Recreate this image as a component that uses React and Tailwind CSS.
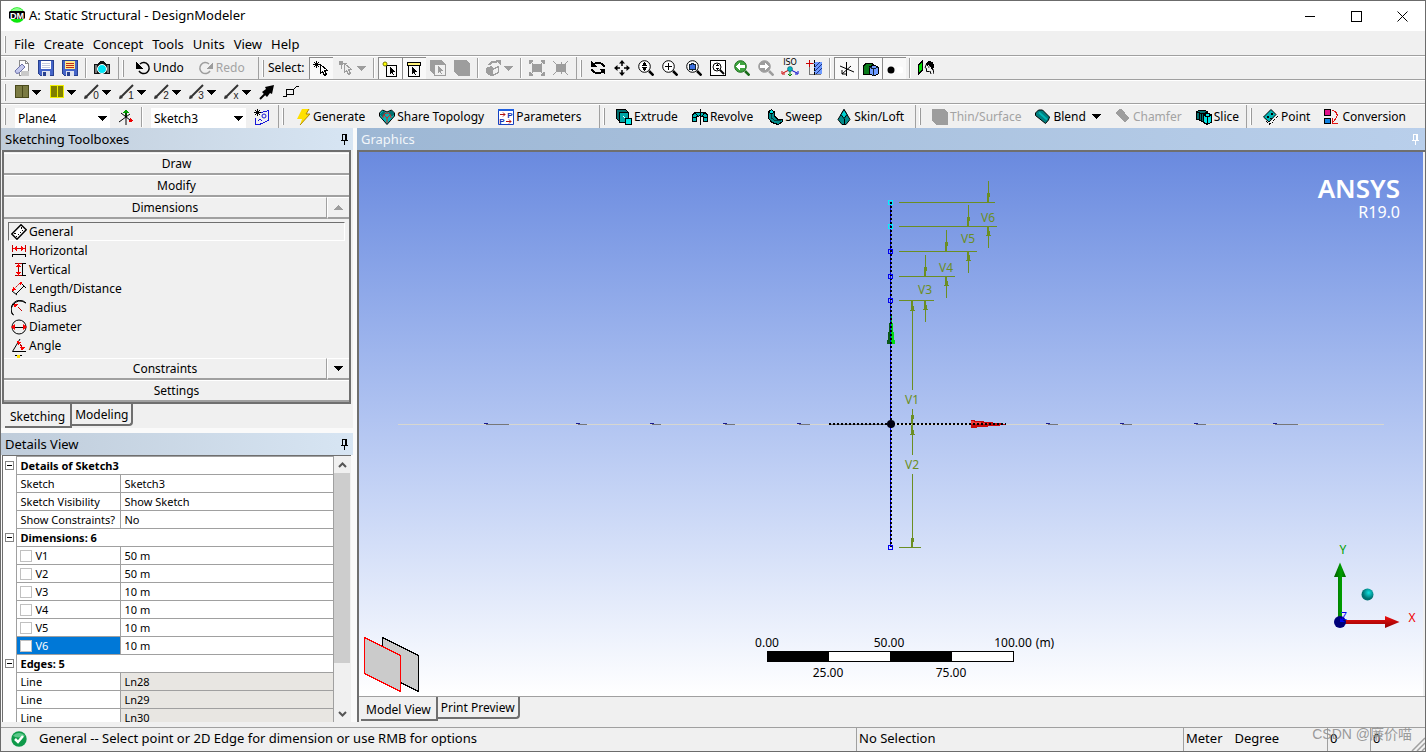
import { useState } from "react";

// --- Icons ---
const Icon = ({ children, className = "h-4 w-4" }) => (
  <svg
    className={`${className} shrink-0`}
    viewBox="0 0 16 16"
    fill="none"
    stroke="#000"
    shapeRendering="crispEdges"
    aria-hidden="true"
  >
    {children}
  </svg>
);

const Caret = ({ color = "#000", up = false }) => (
  <svg className="h-[5px] w-[9px] shrink-0" viewBox="0 0 9 5" shapeRendering="crispEdges" aria-hidden="true">
    <path d={up ? "M0 5h9L4.5 0z" : "M0 0h9L4.5 5z"} fill={color} />
  </svg>
);

const AppIcon = () => (
  <svg className="h-4 w-4 shrink-0" viewBox="0 0 16 16" aria-hidden="true">
    <circle cx="8" cy="8" r="7.8" fill="#0be80b" />
    <path d="M2 4a7 6 0 0 1 12 0z" fill="#8dff8d" />
    <path d="M1 4h14l1 1v6l-1 1H1l-1-1V5z" fill="#000" />
    <text x="8" y="11.5" textAnchor="middle" fontSize="9" fontWeight="700" fill="#fff" fontFamily="Liberation Sans, sans-serif">
      DM
    </text>
  </svg>
);

const NewIcon = () => (
  <Icon>
    <path d="M5.500 .5h6l3 3v12h-9z" fill="#fdfdfd" stroke="#8a8a8a" />
    <path d="M7 11h8v5H7z" fill="#c9c9c9" stroke="none" />
    <path d="M11.500 .5v3h3" stroke="#8a8a8a" />
    <path d="M1 11l7-7 3 3-6 6q-3 2-4-2z" fill="#c5c9ee" stroke="#6d72a8" shapeRendering="auto" />
  </Icon>
);

const SaveIcon = ({ lines = "#c4cbe0", paper = "#fff" }) => (
  <Icon>
    <path d="M.5 .5h15v15h-13l-2-2z" fill="#4464c8" stroke="#27408f" />
    <path d="M3 1h10v8H3z" fill={paper} stroke="none" />
    <path d="M4 3.500h8M4 5.500h8M4 7.500h8" stroke={lines} />
    <path d="M4 11h8v5H4z" fill="#dfe3ee" stroke="none" />
    <path d="M5 12h3v4H5z" fill="#27408f" stroke="none" />
  </Icon>
);

const CameraIcon = () => (
  <Icon>
    <path d="M0 4h4l2-3h4l2 3h4v10H0z" fill="#111" stroke="none" />
    <path d="M1 5h2v8H1zM13 5h2v8h-2z" fill="#777" stroke="none" />
    <circle cx="8" cy="9" r="4.500" fill="#00e5f5" stroke="#fff" shapeRendering="auto" />
  </Icon>
);

const UndoIcon = () => (
  <Icon>
    <path d="M4 4a5.500 5.500 0 1 1-1 7" strokeWidth="1.500" shapeRendering="auto" transform="translate(1 0)" />
    <path d="M1 2v7h7z" fill="#000" stroke="none" />
  </Icon>
);

const RedoIcon = () => (
  <Icon>
    <path d="M11 4a5.500 5.500 0 1 0 1 7" strokeWidth="1.500" stroke="#9d9d9d" shapeRendering="auto" />
    <path d="M15 2v7H8z" fill="#9d9d9d" stroke="none" />
  </Icon>
);

const CursorShape = ({ x = 0, y = 0, fill = "#fff", stroke = "#000" }) => (
  <path
    transform={`translate(${x} ${y})`}
    d="M.5 .5v9l2-2 2 4 2-1-2-4h3z"
    fill={fill}
    stroke={stroke}
  />
);

const NewSelectIcon = () => (
  <Icon>
    <path d="M3.500 0v7M0 3.500h7M1 1l5 5M6 1l-5 5" />
    <CursorShape x={7} y={3} />
  </Icon>
);

const SelectModeIcon = () => (
  <Icon>
    <path d="M0 1h4v4H0z" fill="#9d9d9d" stroke="none" />
    <path d="M4 3h4M2 5v4" stroke="#9d9d9d" />
    <CursorShape x={5} y={3} fill="#eee" stroke="#9d9d9d" />
  </Icon>
);

const PointFilterIcon = () => (
  <Icon>
    <path d="M4.500 4.500h10v11h-10z" />
    <circle cx="3" cy="3" r="2" fill="#ff0" stroke="#7a7a00" shapeRendering="auto" />
    <path d="M8 6v7l2-2 1 3h1l-1-3h2z" fill="#000" stroke="none" />
  </Icon>
);

const EdgeFilterIcon = () => (
  <Icon>
    <path d="M2.500 4.500h11v11h-11z" />
    <path d="M1.500 1.500h13v3h-13z" fill="#fff27a" />
    <path d="M6 6v7l2-2 1 3h1l-1-3h2z" fill="#000" stroke="none" />
  </Icon>
);

const FaceFilterIcon = () => (
  <Icon>
    <path d="M0 0h11l4 4H4v11l-4-4z" fill="#9d9d9d" stroke="none" />
    <path d="M4.500 4.500h11v11h-11z" fill="#f0f0f0" stroke="#9d9d9d" />
    <path d="M8 6v7l2-2 1 3h1l-1-3h2z" fill="#9d9d9d" stroke="none" />
  </Icon>
);

const BodyIcon = () => (
  <Icon>
    <path d="M0 0h12l4 4v12H4l-4-4z" fill="#9d9d9d" stroke="none" />
  </Icon>
);

const ExtendIcon = () => (
  <Icon>
    <path d="M0 8l5-2 2 2v7l-2 1-5-3z" fill="#9d9d9d" stroke="none" />
    <path d="M6.500 9.500l6-3v6l-6 3z" fill="#f0f0f0" stroke="#9d9d9d" />
    <path d="M3 5q2-4 8-3" stroke="#9d9d9d" strokeWidth="2" />
    <path d="M9 0h6v6z" fill="#9d9d9d" stroke="none" />
  </Icon>
);

const BoxZoomIcon = () => (
  <Icon>
    <path d="M3 4h10v8H3z" fill="#9d9d9d" stroke="none" />
    <path d="M0 0h4v2H2v2H0zM12 0h4v4h-2V2h-2zM0 12h2v2h2v2H0zM14 12h2v4h-4v-2h2z" fill="#9d9d9d" stroke="none" />
    <path d="M1 1l3 3M15 1l-3 3M1 15l3-3M15 15l-3-3" stroke="#9d9d9d" />
  </Icon>
);

const ShrinkIcon = () => (
  <Icon>
    <path d="M3 4h10v8H3z" fill="#9d9d9d" stroke="none" />
    <path d="M0 1l4 4M15 1l-4 4M0 15l4-4M15 15l-4-4M8 2v2M8 12v2" stroke="#9d9d9d" />
  </Icon>
);

const RotateIcon = () => (
  <Icon>
    <path d="M3 5q4-4 9-1q2 1 2 3" strokeWidth="2" />
    <path d="M1 1v6h6z" fill="#000" stroke="none" />
    <path d="M13 11q-4 4-9 1q-2-1-2-3" strokeWidth="2" />
    <path d="M15 15V9H9z" fill="#000" stroke="none" />
  </Icon>
);

const PanIcon = () => (
  <Icon>
    <path d="M8 3v3M8 10v3M3 8h3M10 8h3" strokeWidth="1.500" shapeRendering="auto" />
    <path d="M8 0l3 3.500H5zM8 16l3-3.500H5zM0 8l3.500-3v6zM16 8l-3.500-3v6z" fill="#000" stroke="none" shapeRendering="auto" />
  </Icon>
);

const Lens = ({ children, color = "#000", fill = "#fff" }) => (
  <Icon>
    <circle cx="6.500" cy="6.500" r="5.800" fill={fill} stroke={color} shapeRendering="auto" />
    <path d="M11 11l4.500 4.500" stroke={color} strokeWidth="2.500" shapeRendering="auto" />
    {children}
  </Icon>
);

const ZoomFitIcon = () => (
  <Icon>
    <path d="M.5 .5h15v15H.5z" fill="#fff" />
    <circle cx="7" cy="7" r="4" shapeRendering="auto" />
    <path d="M10 10l4 4" strokeWidth="2" shapeRendering="auto" />
    <path d="M7 4l2 2H5zM7 10l2-2H5z" fill="#000" stroke="none" />
  </Icon>
);

const IsoIcon = () => (
  <svg className="h-4 w-4 shrink-0 overflow-visible" viewBox="0 0 16 16" aria-hidden="true">
    <text x="8" y="5" textAnchor="middle" fontSize="8" fontFamily="DejaVu Sans, sans-serif" fill="#000">
      ISO
    </text>
    <path d="M7 10L1 13M0 11v3h3" stroke="#c00" fill="none" />
    <path d="M9 10l6 3M16 11v3h-3" stroke="#00c" fill="none" />
    <path d="M8 11v5M6 14l2 2 2-2" stroke="#008000" fill="none" />
    <circle cx="8" cy="9" r="2.500" fill="#00b5c0" stroke="#045" strokeWidth="0.500" />
  </svg>
);

const LookAtPlaneIcon = () => (
  <Icon>
    <path d="M3.500 3.500h11v11h-11z" stroke="#777" />
    <path d="M8 2h8v12H8z" fill="#6f9bff" stroke="none" />
    <path d="M9 7l5-5M9 11l7-7M10 14l6-6" stroke="#1d3480" shapeRendering="auto" />
    <path d="M3.500 0v7M0 3.500h7" stroke="#c00" />
    <path d="M8.500 0v16" strokeDasharray="3 1" />
  </Icon>
);

const AxisIcon = () => (
  <Icon>
    <path d="M7.500 1v14M1 5l14 6M3 13l9-8M3 9v4h4" shapeRendering="auto" />
  </Icon>
);

const ModelIcon = () => (
  <Icon>
    <path d="M.5 5l3-3h6v7l-3 4h-6z" fill="#0a7a1a" />
    <path d="M6.500 6l4-2 4.500 2v7l-4 2-4.500-2z" fill="#6f9bff" />
    <path d="M6.500 6l4 2 4.500-2M10.500 8v7" stroke="#123" />
  </Icon>
);

const DotIcon = () => (
  <Icon>
    <circle cx="4" cy="9" r="3.500" fill="#000" stroke="none" shapeRendering="auto" />
    <circle cx="13" cy="9" r="3.500" fill="#fff" stroke="none" shapeRendering="auto" />
  </Icon>
);

const LookAtIcon = () => (
  <Icon>
    <path d="M.5 5l4-4v9l-4 4z" fill="#00e000" />
    <path d="M8 3q1-2 4-2 4 1 4 5l-1 5-2-3-2-3-2 1z" fill="#000" stroke="none" />
    <path d="M8.500 4L7 7.500l1.500 1v3h3M10 7h1.500M12 11l1 3M15 9l1 5" shapeRendering="auto" />
  </Icon>
);

const LayersIcon = ({ fill, stroke }) => (
  <Icon>
    <path d="M1.500 1.500h13v12h-13z" fill={fill} stroke={stroke} />
    <path d="M8.500 2v11" stroke={stroke} />
  </Icon>
);

const StrokeIcon = ({ label }) => (
  <svg className="h-4 w-4 shrink-0" viewBox="0 0 16 16" aria-hidden="true">
    <path d="M1 14L14 1" stroke="#333" strokeWidth="2" />
    <path d="M0 15l1-4 3 3z" fill="#333" />
    <text x="12" y="15" textAnchor="middle" fontSize="10" fontFamily="Liberation Sans, sans-serif" fill="#222">
      {label}
    </text>
  </svg>
);

const ThickPinIcon = () => (
  <Icon>
    <path d="M1 15l7-7" strokeWidth="2" shapeRendering="auto" />
    <path d="M15 1l-2 9-2-1-3 4-5-5 4-3-1-2z" fill="#000" stroke="none" shapeRendering="auto" />
  </Icon>
);

const VertexIcon = () => (
  <Icon>
    <path d="M3.500 5.500h7v5h-7zM0 12.500h3l1-2M10 6l4-4h2" />
  </Icon>
);

const NewPlaneIcon = () => (
  <Icon>
    <path d="M8 8V3" stroke="#008000" strokeWidth="2" />
    <path d="M8 0l3 4H5z" fill="#00a000" stroke="none" />
    <path d="M16 12l-5 1 1-4z" fill="#e00" stroke="none" />
    <path d="M8 4v12M3 4l9 7M1 13l11-8" shapeRendering="auto" />
  </Icon>
);

const NewSketchIcon = () => (
  <Icon>
    <path d="M3.500 0v7M0 3.500h7M1 1l5 5M6 1l-5 5" />
    <path d="M7 3.500l7.500-2v10l-9 4H1.500V9" stroke="#1717d8" />
    <circle cx="10" cy="7" r="2" stroke="#1717d8" shapeRendering="auto" />
    <path d="M4 12l2-2 2 2" stroke="#1717d8" />
  </Icon>
);

const GenerateIcon = () => (
  <Icon>
    <path d="M7 0h7l-3 5h4L5 16l2-6H2z" fill="#ffe000" stroke="none" shapeRendering="auto" />
    <path d="M14 0l-3 5h4L5 16" stroke="#b08a00" shapeRendering="auto" />
  </Icon>
);

const ShareIcon = () => (
  <Icon>
    <path d="M.5 4l3-3 4.500 2 4.500-2 3 3v3L8 15.500.5 7z" fill="#00b5b5" shapeRendering="auto" />
    <path d="M1 5l3-3 3 2-4 4zM15 5l-3-3-3 2 4 4z" fill="#006f6f" stroke="none" />
    <path d="M8 14V9L5 6M8 9l3-3M4 9q0-5 4-5t4 5" stroke="#e02020" shapeRendering="auto" />
  </Icon>
);

const ParametersIcon = () => (
  <svg className="h-4 w-4 shrink-0" viewBox="0 0 16 16" aria-hidden="true">
    <path d="M.5 .5h15v15H.5z" fill="#fff" stroke="#1540c0" />
    <path d="M0 0h16v2H0z" fill="#1f5fe0" />
    <text x="12" y="9" textAnchor="middle" fontSize="8" fontWeight="700" fill="#1030b0" fontFamily="Liberation Sans, sans-serif">
      P
    </text>
    <text x="4" y="15" textAnchor="middle" fontSize="8" fontWeight="700" fill="#1030b0" fontFamily="Liberation Sans, sans-serif">
      P
    </text>
    <path d="M2 5.500h5M5 3.500l2 2-2 2M8 12.500h5M11 10.500l2 2-2 2" stroke="#b01010" fill="none" />
  </svg>
);

const ExtrudeIcon = () => (
  <Icon>
    <path d="M.5 .5h9l3 3v9h-9l-3-3z" fill="#006f6f" />
    <path d="M3.500 3.500h9v10h-9z" fill="#00a5a5" />
    <path d="M7 7l4 4" stroke="#fff" />
    <path d="M9.500 9.500h6v6h-6z" fill="#00e5e5" />
  </Icon>
);

const RevolveIcon = () => (
  <Icon>
    <path d="M.5 12.500V6l3-3h9l3 3v6.500h-4V8L8 6.500 4.500 8v4.500z" fill="#00b5b5" />
    <path d="M3 3.500L6 7M13 3.500L10 7M4 8H1M12 8h3" />
    <path d="M8.500 0v16" />
  </Icon>
);

const SweepIcon = () => (
  <Icon>
    <path d="M1.500 3l3-2.500 3 2.500v4l3 3 4.500 0v3l-4 2.500-6-2-3.500-4z" fill="#008a8a" />
    <path d="M1.500 3l3 2 3-2-3-2.500z" fill="#00e5e5" />
    <path d="M4.500 5v4l4 3 6-1" stroke="#003c3c" />
  </Icon>
);

const SkinIcon = () => (
  <Icon>
    <path d="M8 .5l3 5 3 5-4 5H6l-4-5 3-5z" fill="#008a8a" shapeRendering="auto" />
    <path d="M8 .5l3 5-3 4-3-4z" fill="#00d5d5" shapeRendering="auto" />
    <path d="M8 10v6" />
  </Icon>
);

const BlendIcon = () => (
  <Icon>
    <path d="M.5 4l3-3h4l7 7-1 3-3 3.500-10-8z" fill="#007f7f" shapeRendering="auto" />
    <path d="M4 3.500l8 7" stroke="#00b5b5" strokeWidth="2" shapeRendering="auto" />
  </Icon>
);

const ChamferIcon = () => (
  <Icon>
    <path d="M0 4l4-4h3l7 9-4 5z" fill="#9d9d9d" stroke="none" />
  </Icon>
);

const SliceIcon = () => (
  <Icon>
    <path d="M.5 3l3-2h5l3 2v8l-4 2-7-3z" fill="#006f6f" />
    <path d="M3.500 4v8M5.500 4.500v8M1 3l6 2 5-2" />
    <path d="M7.500 6l4-2 4 2v7l-4 2.500-4-2z" fill="#00e5e5" />
    <path d="M7.500 6l4 2 4-2M11.500 8v8" />
  </Icon>
);

const PointIcon = () => (
  <Icon>
    <path d="M.5 8L8 .5l5 5L6 13z" fill="#00b5b5" shapeRendering="auto" />
    <path d="M15 7l-8 8.500L3 12" strokeDasharray="1 1" />
    <path d="M4 7h2v2H4zM8 4h2v2H8zM7 9h2v1H7z" fill="#000" stroke="none" />
  </Icon>
);

const ConversionIcon = () => (
  <Icon>
    <path d="M.5 .5h6v6h-6z" fill="#e0108a" />
    <path d="M.5 9.500h6v5h-6z" fill="#1080e0" />
    <path d="M8 1q6 2 5 7l-4 5M8.500 9v5h5" stroke="#e01010" />
  </Icon>
);

const PinIcon = ({ color = "#000" }) => (
  <svg className="h-[11px] w-[9px] shrink-0" viewBox="0 0 9 11" fill="none" stroke={color} shapeRendering="crispEdges" aria-hidden="true">
    <path d="M2.500 6V.5h4V6M5.500 1v5M1 6.500h7M4.500 7v4" />
  </svg>
);

const GeneralIcon = () => (
  <Icon>
    <path d="M.8 10L10 .8l5.200 5L6 15.200z" fill="#fff" strokeWidth="1.500" shapeRendering="auto" />
    <path d="M5 12l1 1M7 10l1 1M9 8l1 1M11 6l1 1M3 9.500h2M10 3v2" />
  </Icon>
);

const HorizontalIcon = () => (
  <Icon>
    <path d="M1.500 2v7M14.500 2v7M2 5.500h12" stroke="#c00000" />
    <path d="M2 5.500L6 3v5zM14 5.500L10 3v5z" fill="#f00" stroke="none" />
    <path d="M1.500 14v-3h13v3" />
  </Icon>
);

const VerticalIcon = () => (
  <Icon>
    <path d="M4 1.500h7M4 13.500h7M7.500 2v11" stroke="#a00000" />
    <path d="M7.500 1L5 5h5zM7.500 14L5 10h5z" fill="#f00" stroke="none" />
    <path d="M14.500 1.500h-3v12h3" />
  </Icon>
);

const LengthIcon = () => (
  <Icon>
    <path d="M3 8l6-6" stroke="#c00000" strokeDasharray="2 1" shapeRendering="auto" />
    <path d="M1 10l1-4 3 3zM11 1L7 2l3 3z" fill="#f00" stroke="none" />
    <path d="M5 13l8-8M1 10l5 4M11 3l4 4" shapeRendering="auto" />
  </Icon>
);

const RadiusIcon = () => (
  <Icon>
    <path d="M2.500 15A8.500 8.500 0 0 1 15 3Q7-2 2 5T2.500 15" shapeRendering="auto" />
    <path d="M3 4h4L4 7z" fill="#f00" stroke="#f00" />
    <path d="M5 5l6 6" stroke="#c00000" strokeDasharray="2 1" />
  </Icon>
);

const DiameterIcon = () => (
  <Icon>
    <circle cx="8" cy="8" r="7" shapeRendering="auto" />
    <path d="M3 8h10" />
    <path d="M0 8l4-3v6zM16 8l-4-3v6z" fill="#f00" stroke="none" shapeRendering="auto" />
  </Icon>
);

const AngleIcon = () => (
  <Icon>
    <path d="M9 1L1.500 13.500H15" shapeRendering="auto" />
    <path d="M7 4q4 3 4 8" stroke="#c00000" />
    <path d="M6 3l4 1-3 3zM9 9h5l-3 4z" fill="#f00" stroke="none" />
  </Icon>
);

const SemiAutoIcon = () => (
  <Icon>
    <path d="M4 .5h2M9 .5h2" />
    <path d="M6 0h3v5H6z" fill="#ffe000" stroke="none" />
  </Icon>
);

const CheckIcon = () => (
  <svg className="h-4 w-4 shrink-0" viewBox="0 0 16 16" aria-hidden="true">
    <circle cx="8" cy="8" r="7.700" fill="#0f9a4a" />
    <path d="M2 5a7 6 0 0 1 12 0q-6 3-12 0z" fill="#5cc98a" />
    <path d="M4 8l3 3 5-6" fill="none" stroke="#fff" strokeWidth="2.500" />
  </svg>
);

// --- Toolbar parts ---
const Grip = () => (
  <span className="ml-[3px] mr-1 h-[17px] w-[2px] shrink-0 border-r border-[#9a9a9a] bg-white" />
);

const Divider = () => <span className="mx-[3px] h-5 w-[2px] shrink-0 border-r border-white bg-[#a0a0a0]" />;

const Section = ({ children, className = "" }) => (
  <div className={`flex h-full shrink-0 items-center border-[#a0a0a0] ${className}`}>
    <Grip />
    {children}
  </div>
);

const Tool = ({ label, children, pressed = false, disabled = false, wide = false }) => (
  <button
    type="button"
    aria-label={label}
    aria-pressed={pressed || undefined}
    disabled={disabled}
    className={`flex h-[22px] shrink-0 items-center justify-center ${wide ? "w-[35px] gap-0.5" : "w-6"} ${
      pressed ? "border-l border-t border-[#8a8a8a] bg-[#f9f9f9]" : ""
    }`}
  >
    {children}
  </button>
);

const TextTool = ({ icon, label, disabled = false, menu = false }) => (
  <button
    type="button"
    disabled={disabled}
    className="flex h-[22px] shrink-0 items-center gap-0.5 whitespace-nowrap px-[7px] disabled:text-[#a3a3a3]"
  >
    {icon}
    <span>{label}</span>
    {menu && (
      <span className="pl-1">
        <Caret />
      </span>
    )}
  </button>
);

const Combo = ({ label, options }) => (
  <label className="relative ml-[5px] mr-1 block w-[95px] shrink-0 self-end bg-white">
    <span className="sr-only">{label}</span>
    <select className="block h-5 w-full appearance-none bg-white pl-[3px] pt-0.5 text-xs outline-none">
      {options.map((o) => (
        <option key={o}>{o}</option>
      ))}
    </select>
    <span className="pointer-events-none absolute right-[3px] top-2">
      <Caret />
    </span>
  </label>
);

const PanelHeader = ({ title, light = false }) => (
  <div
    className={`flex h-[22px] shrink-0 items-center justify-between pl-1 bg-linear-to-r ${
      light ? "from-[#9db7d4] to-[#b9cfeb] pr-[5px] text-[#f2f6fa]" : "from-[#bfccda] to-[#d7e5f3] pr-1"
    }`}
  >
    <h2>{title}</h2>
    <PinIcon color={light ? "#fff" : "#000"} />
  </div>
);

const Tab = ({ active, onClick, children }) => (
  <button
    type="button"
    role="tab"
    aria-selected={active}
    onClick={onClick}
    className={`border-b-2 border-r-2 border-[#6f6f6f] bg-[#f0f0f0] text-xs ${
      active ? "h-6 px-[5px] pt-[3px]" : "h-[22px] rounded-br-sm px-[3px] pt-0.5"
    }`}
  >
    {children}
  </button>
);

// --- Data ---
const menus = ["File", "Create", "Concept", "Tools", "Units", "View", "Help"];

const dimensionTools = [
  { name: "General", icon: <GeneralIcon /> },
  { name: "Horizontal", icon: <HorizontalIcon /> },
  { name: "Vertical", icon: <VerticalIcon /> },
  { name: "Length/Distance", icon: <LengthIcon /> },
  { name: "Radius", icon: <RadiusIcon /> },
  { name: "Diameter", icon: <DiameterIcon /> },
  { name: "Angle", icon: <AngleIcon /> },
];

const details = [
  {
    title: "Details of Sketch3",
    rows: [
      ["Sketch", "Sketch3"],
      ["Sketch Visibility", "Show Sketch"],
      ["Show Constraints?", "No"],
    ],
  },
  {
    title: "Dimensions: 6",
    checkable: true,
    rows: [
      ["V1", "50 m"],
      ["V2", "50 m"],
      ["V3", "10 m"],
      ["V4", "10 m"],
      ["V5", "10 m"],
      ["V6", "10 m"],
    ],
  },
  {
    title: "Edges: 5",
    readOnly: true,
    rows: [
      ["Line", "Ln28"],
      ["Line", "Ln29"],
      ["Line", "Ln30"],
    ],
  },
];

// --- Toolbars ---
const Toolbars = () => (
  <div className="shrink-0 overflow-hidden text-xs">
    <nav className="flex h-[25px] items-center border-b border-[#a0a0a0] pt-[3px] text-[13px]">
      <Grip />
      <div className="flex">
        {menus.map((m) => (
          <button key={m} type="button" className="pl-1 pr-[5px]">
            {m}
          </button>
        ))}
      </div>
    </nav>

    <div className="flex h-6 items-center border-b border-t border-b-[#a0a0a0] border-t-white">
      <Section className="min-w-[118px] border-r">
        <Tool label="New"><NewIcon /></Tool>
        <Tool label="Save"><SaveIcon /></Tool>
        <Tool label="Save as"><SaveIcon lines="#c22a1a" paper="#ffe98a" /></Tool>
        <Divider />
        <Tool label="Image capture"><CameraIcon /></Tool>
      </Section>
      <Section className="min-w-[140px] border-r">
        <TextTool icon={<UndoIcon />} label="Undo" />
        <TextTool icon={<RedoIcon />} label="Redo" disabled />
      </Section>
      <Section className="min-w-[318px] border-r">
        <span className="pr-1">Select:</span>
        <Tool label="New selection" pressed><NewSelectIcon /></Tool>
        <span className="w-0.5 shrink-0" />
        <Tool label="Select mode" wide disabled><SelectModeIcon /><Caret color="#9d9d9d" /></Tool>
        <Divider />
        <Tool label="Points" pressed><PointFilterIcon /></Tool>
        <Tool label="Edges" pressed><EdgeFilterIcon /></Tool>
        <Tool label="Faces" disabled><FaceFilterIcon /></Tool>
        <Tool label="Bodies" disabled><BodyIcon /></Tool>
        <Divider />
        <Tool label="Extend selection" wide disabled><ExtendIcon /><Caret color="#9d9d9d" /></Tool>
        <Divider />
        <Tool label="Expand" disabled><BoxZoomIcon /></Tool>
        <Tool label="Shrink" disabled><ShrinkIcon /></Tool>
      </Section>
      <Section>
        <Tool label="Rotate"><RotateIcon /></Tool>
        <Tool label="Pan"><PanIcon /></Tool>
        <Tool label="Zoom">
          <Lens><path d="M6.500 2l3 4h-6zM6.500 11l3-4h-6z" fill="#000" stroke="none" /></Lens>
        </Tool>
        <Tool label="Box zoom">
          <Lens><path d="M6.500 3v7M3 6.500h7" /></Lens>
        </Tool>
        <Tool label="Zoom to selection">
          <Lens><path d="M3.500 5l3-1.500 3 1.500v4l-3 1-3-1z" fill="#3c6fe0" stroke="#123" /></Lens>
        </Tool>
        <Tool label="Zoom to fit"><ZoomFitIcon /></Tool>
        <Tool label="Previous view">
          <Lens color="#186a18" fill="#3fa53f"><path d="M2 6.500L6 3v2h5v3H6v2z" fill="#fff" stroke="none" /></Lens>
        </Tool>
        <Tool label="Next view" disabled>
          <Lens color="#9d9d9d" fill="#9d9d9d"><path d="M11 6.500L7 3v2H2v3h5v2z" fill="#fff" stroke="none" /></Lens>
        </Tool>
        <Tool label="Isometric view"><IsoIcon /></Tool>
        <Tool label="Display plane"><LookAtPlaneIcon /></Tool>
        <Divider />
        <Tool label="Axes" pressed><AxisIcon /></Tool>
        <Tool label="Display model" pressed><ModelIcon /></Tool>
        <Tool label="Display points" pressed><DotIcon /></Tool>
        <Divider />
        <Tool label="Look at"><LookAtIcon /></Tool>
      </Section>
    </div>

    <div className="flex h-6 items-center border-b border-t border-b-[#a0a0a0] border-t-white">
      <Grip />
      <Tool label="Face colour" wide><LayersIcon fill="#7b7b43" stroke="#4a4a1c" /><Caret /></Tool>
      <Tool label="Edge colour" wide><LayersIcon fill="#808000" stroke="#f0f000" /><Caret /></Tool>
      {["0", "1", "2", "3", "x"].map((n) => (
        <Tool key={n} label={`Edge joints ${n}`} wide><StrokeIcon label={n} /><Caret /></Tool>
      ))}
      <Tool label="Thick edges"><ThickPinIcon /></Tool>
      <Tool label="Vertices"><VertexIcon /></Tool>
    </div>

    <div className="flex h-6 items-center border-t border-white">
      <Section className="min-w-[278px] border-r">
        <Combo label="Plane" options={["Plane4", "XYPlane", "ZXPlane", "YZPlane"]} />
        <Tool label="New plane"><NewPlaneIcon /></Tool>
        <Divider />
        <Combo label="Sketch" options={["Sketch3", "Sketch2", "Sketch1"]} />
        <Tool label="New sketch"><NewSketchIcon /></Tool>
      </Section>
      <Section className="min-w-[321px] border-r">
        <TextTool icon={<GenerateIcon />} label="Generate" />
        <TextTool icon={<ShareIcon />} label="Share Topology" />
        <TextTool icon={<ParametersIcon />} label="Parameters" />
      </Section>
      <Section className="min-w-[316px] border-r">
        <TextTool icon={<ExtrudeIcon />} label="Extrude" />
        <TextTool icon={<RevolveIcon />} label="Revolve" />
        <TextTool icon={<SweepIcon />} label="Sweep" />
        <TextTool icon={<SkinIcon />} label="Skin/Loft" />
      </Section>
      <Section className="min-w-[331px] border-r">
        <TextTool icon={<BodyIcon />} label="Thin/Surface" disabled />
        <TextTool icon={<BlendIcon />} label="Blend" menu />
        <TextTool icon={<ChamferIcon />} label="Chamfer" disabled />
        <TextTool icon={<SliceIcon />} label="Slice" />
      </Section>
      <Section>
        <TextTool icon={<PointIcon />} label="Point" />
        <TextTool icon={<ConversionIcon />} label="Conversion" />
      </Section>
    </div>
  </div>
);

// --- Left side ---
const barClass =
  "h-[22px] shrink-0 border-b-2 border-t border-b-[#a0a0a0] border-t-white text-center leading-[19px]";

const SketchingToolboxes = () => {
  const [tool, setTool] = useState("General");
  const [tab, setTab] = useState("Sketching");

  return (
    <section className="flex shrink-0 flex-col">
      <PanelHeader title="Sketching Toolboxes" />
      <div className="ml-px mr-0.5 flex h-[254px] flex-col border-2 border-[#6f6f6f] pt-px text-xs">
        <button type="button" className={barClass}>Draw</button>
        <button type="button" className={barClass}>Modify</button>
        <div className="flex shrink-0">
          <button type="button" className={`${barClass} flex-1 border-r border-r-[#a0a0a0]`}>Dimensions</button>
          <button type="button" aria-label="Scroll up" disabled className={`${barClass} flex w-[22px] items-center justify-center border-l border-l-white`}>
            <Caret up color="#9d9d9d" />
          </button>
        </div>
        <ul className="min-h-0 flex-1 overflow-hidden px-1 pt-[3px]">
          {dimensionTools.map((t) => (
            <li key={t.name}>
              <button
                type="button"
                onClick={() => setTool(t.name)}
                className={`flex h-[19px] w-full items-center gap-0.5 border px-0.5 ${
                  tool === t.name
                    ? "border-b-white border-l-[#6f6f6f] border-r-white border-t-[#6f6f6f]"
                    : "border-transparent"
                }`}
              >
                {t.icon}
                {t.name}
              </button>
            </li>
          ))}
          <li className="pl-[3px]">
            <SemiAutoIcon />
          </li>
        </ul>
        <div className="flex shrink-0">
          <button type="button" className={`${barClass} flex-1 border-r border-r-[#a0a0a0] border-t-[#a0a0a0]`}>Constraints</button>
          <button type="button" aria-label="Scroll down" className={`${barClass} flex w-[22px] items-center justify-center border-l border-l-white`}>
            <Caret />
          </button>
        </div>
        <button type="button" className={barClass}>Settings</button>
      </div>
      <div role="tablist" className="ml-1 flex h-6 items-start">
        {["Sketching", "Modeling"].map((t) => (
          <Tab key={t} active={tab === t} onClick={() => setTab(t)}>
            {t}
          </Tab>
        ))}
      </div>
    </section>
  );
};

const DetailsView = () => {
  const [checked, setChecked] = useState({});

  return (
    <section className="flex min-h-0 flex-1 flex-col">
      <PanelHeader title="Details View" />
      <div className="ml-px mr-0.5 flex min-h-0 flex-1 border-l border-t border-[#6f6f6f] bg-white">
        <div className="min-w-0 flex-1 overflow-hidden">
          <table className="w-full table-fixed border-collapse text-[11px] leading-[17px]">
            <colgroup>
              <col className="w-[13px]" />
              <col className="w-[104px]" />
              <col />
            </colgroup>
            {details.map((group) => (
              <tbody key={group.title}>
                <tr className="h-[18px]">
                  <td className="p-0">
                    <button
                      type="button"
                      aria-label={`Collapse ${group.title}`}
                      className="ml-0.5 flex h-[9px] w-[9px] items-center justify-center border border-[#848484]"
                    >
                      <span className="h-px w-[5px] bg-black" />
                    </button>
                  </td>
                  <th colSpan={2} className="border border-[#a0a0a0] p-0 pl-1 text-left font-bold">
                    {group.title}
                  </th>
                </tr>
                {group.rows.map(([name, value]) => {
                  const selected = name === "V6";
                  return (
                    <tr key={name + value} className="h-[18px]">
                      <td className="p-0" />
                      <td
                        className={`whitespace-nowrap border border-[#a0a0a0] p-0 ${
                          group.checkable ? "pl-[3px]" : "pl-1"
                        } ${selected ? "bg-[#0078d7] text-white" : ""}`}
                      >
                        {group.checkable ? (
                          <label className="flex items-center gap-1">
                            <input
                              type="checkbox"
                              checked={!!checked[name]}
                              onChange={() => setChecked({ ...checked, [name]: !checked[name] })}
                              className="h-3 w-3 appearance-none border border-[#c0c0c0] bg-white checked:bg-[#0078d7]"
                            />
                            {name}
                          </label>
                        ) : (
                          name
                        )}
                      </td>
                      <td className={`border border-[#a0a0a0] p-0 pl-1 ${group.readOnly ? "bg-[#e8e6e2]" : ""}`}>
                        {value}
                      </td>
                    </tr>
                  );
                })}
              </tbody>
            ))}
          </table>
        </div>
        <div className="flex w-[17px] shrink-0 flex-col bg-[#f0f0f0] pr-px">
          <button type="button" aria-label="Scroll up" className="flex h-[17px] items-center justify-center">
            <svg className="h-[6px] w-[9px]" viewBox="0 0 9 6" fill="none" stroke="#555" strokeWidth="2">
              <path d="M1 5l3.500-3.500L8 5" />
            </svg>
          </button>
          <div className="min-h-0 flex-1">
            <div className="h-[82%] bg-[#cdcdcd]" />
          </div>
          <button type="button" aria-label="Scroll down" className="flex h-[17px] items-center justify-center">
            <svg className="h-[6px] w-[9px]" viewBox="0 0 9 6" fill="none" stroke="#555" strokeWidth="2">
              <path d="M1 1l3.500 3.500L8 1" />
            </svg>
          </button>
        </div>
      </div>
    </section>
  );
};

// --- Graphics ---
const OLIVE = "#6b8e23";

const extensionLines = [
  [202, 995],
  [226, 997],
  [251, 977],
  [276, 955],
  [300, 934],
  [547, 921],
];

// x, upper line, lower line of every stacked 10 m dimension
const stacked = [
  { name: "V6", x: 988, top: 202, bottom: 226, label: 222 },
  { name: "V5", x: 968, top: 226, bottom: 251, label: 243 },
  { name: "V4", x: 946, top: 251, bottom: 276, label: 272 },
  { name: "V3", x: 925, top: 276, bottom: 300, label: 294 },
];

const planeDashes = [
  [484, 509],
  [576, 587],
  [650, 661],
  [723, 735],
  [797, 810],
  [1046, 1058],
  [1120, 1132],
  [1194, 1206],
  [1273, 1298],
];

const ArrowHead = ({ x, y, up }) => (
  <path d={up ? `M${x} ${y}l2 9h-3z` : `M${x} ${y}l2-9h-3z`} fill={OLIVE} stroke={OLIVE} />
);

const ModelDrawing = () => (
  <svg
    className="absolute inset-0 h-full w-full"
    viewBox="359 152 1064 544"
    fill="none"
    shapeRendering="crispEdges"
    fontFamily="Noto Sans, sans-serif"
    role="img"
    aria-label="Sketch geometry"
  >
    <path d="M398 424.500H1384" stroke="#d6d6d0" />
    {planeDashes.map(([a, b]) => (
      <g key={a}>
        <path d={`M${a} 423.500h4`} stroke="#1a1a90" />
        <path d={`M${a + 2} 424.500H${b}`} stroke="#777" />
      </g>
    ))}

    {/* dimensions */}
    <g stroke={OLIVE}>
      {extensionLines.map(([y, x]) => (
        <path key={y} d={`M899 ${y}.5H${x}`} />
      ))}
      {stacked.map((d) => (
        <path key={d.name} d={`M${d.x}.5 ${d.top - 21}V${d.top}M${d.x}.5 ${d.bottom}v22`} />
      ))}
      <path d="M912.500 300V390M912.500 409V455M912.500 474V547" />
    </g>
    {stacked.map((d) => (
      <g key={d.name}>
        <ArrowHead x={d.x} y={d.top} />
        <ArrowHead x={d.x} y={d.bottom} up />
      </g>
    ))}
    <ArrowHead x={912} y={301} up />
    <ArrowHead x={912} y={424} />
    <ArrowHead x={912} y={425} up />
    <ArrowHead x={912} y={547} />
    <g fill={OLIVE} fontSize="12" textAnchor="middle">
      {stacked.map((d) => (
        <text key={d.name} x={d.x} y={d.label}>
          {d.name}
        </text>
      ))}
      <text x="912" y="404">V1</text>
      <text x="912" y="469">V2</text>
    </g>

    {/* axes and sketch line */}
    <path d="M891 311l-4 33h4z" fill="#0b5a1a" />
    <path d="M891 311l4 33h-4z" fill="#00dc14" />
    <path d="M971 420v8l35-3v-1z" fill="#c80a0a" />
    <path d="M971 421v3h20z" fill="#f04040" />
    <path d="M829 424.500h60" stroke="#777" />
    <path d="M829 424H1006" stroke="#000" strokeWidth="2" strokeDasharray="2 2" />
    <path d="M890.500 202V547" stroke="#0000f0" />
    <path d="M891 202V547" stroke="#000" strokeWidth="2" strokeDasharray="2 2" />
    <circle cx="891" cy="424" r="4" fill="#000010" shapeRendering="auto" />
    {[202, 226, 251, 276, 300, 547].map((y) => (
      <path key={y} d={`M888.500 ${y - 2}.5h4v4h-4z`} stroke={y < 230 ? "#00f0ff" : "#0000f0"} />
    ))}

    {/* model and print planes */}
    <path d="M382.500 637.500l36 18v36l-36-18z" fill="#cbcbcb" stroke="#000" />
    <path d="M364.500 637.500l36 18v36l-36-18z" fill="#cbcbcb" stroke="#f00" />

    {/* ruler */}
    <path d="M767.500 651.500h246v10h-246z" fill="#fff" stroke="#000" />
    <path d="M767 651h62v11h-62zM890 651h62v11h-62z" fill="#000" />
    <g fill="#000" fontSize="12" textAnchor="middle">
      <text x="767" y="647">0.00</text>
      <text x="889" y="647">50.00</text>
      <text x="1013" y="647">100.00</text>
      <text x="1045" y="647">(m)</text>
      <text x="828" y="677">25.00</text>
      <text x="951" y="677">75.00</text>
    </g>

    {/* triad */}
    <g shapeRendering="auto">
      <defs>
        <linearGradient id="triadGreen">
          <stop offset="0" stopColor="#005a00" />
          <stop offset="0.600" stopColor="#00a000" />
          <stop offset="1" stopColor="#006000" />
        </linearGradient>
        <linearGradient id="triadRed" x2="0" y2="1">
          <stop offset="0" stopColor="#f01010" />
          <stop offset="1" stopColor="#900000" />
        </linearGradient>
        <radialGradient id="triadCyan" cx="0.600" cy="0.350">
          <stop offset="0" stopColor="#10e0e0" />
          <stop offset="1" stopColor="#007070" />
        </radialGradient>
      </defs>
      <path d="M1338 576h4v44h-4zM1340 562.500l6 14.500h-12z" fill="url(#triadGreen)" />
      <path d="M1342 620h43v4h-43zM1385 616v12l14.500-6z" fill="url(#triadRed)" />
      <circle cx="1340" cy="622" r="6" fill="#00007a" />
      <path d="M1340 618l5 4h-5z" fill="#0000f0" />
      <circle cx="1367.500" cy="594.500" r="6" fill="url(#triadCyan)" />
      <g fontSize="12" textAnchor="middle">
        <text x="1343" y="554" fill="#00a000">Y</text>
        <text x="1412" y="622" fill="#f00000">X</text>
        <text x="1344" y="620" fontSize="10" fill="#0000f0">Z</text>
      </g>
    </g>
  </svg>
);

const GraphicsPanel = () => {
  const [view, setView] = useState("Model View");

  return (
    <section className="flex min-w-0 flex-1 flex-col">
      <PanelHeader title="Graphics" light />
      <div className="flex min-h-0 flex-1 flex-col border-l-2 border-t-2 border-[#6f6f6f]">
        <div className="relative mr-0.5 min-h-0 flex-1 bg-linear-to-b from-[#6a8adf] to-white">
          <ModelDrawing />
          <div className="absolute right-[23px] top-5 text-right text-white">
            <p className="text-[26px] font-semibold leading-8">ANSYS</p>
            <p className="text-base leading-4">R19.0</p>
          </div>
        </div>
        <div role="tablist" className="flex h-[26px] shrink-0 items-start border-t border-[#a0a0a0] pl-0.5">
          {["Model View", "Print Preview"].map((t) => (
            <Tab key={t} active={view === t} onClick={() => setView(t)}>
              {t}
            </Tab>
          ))}
        </div>
      </div>
    </section>
  );
};

// --- Status bar ---
const StatusBar = () => (
  <footer className="relative mt-[5px] flex h-6 shrink-0 items-center border-t border-[#a0a0a0] whitespace-nowrap leading-5">
    <div className="flex h-full min-w-0 flex-1 items-start gap-3 pl-2.5">
      <span className="pt-[3px]">
        <CheckIcon />
      </span>
      General -- Select point or 2D Edge for dimension or use RMB for options
    </div>
    <div className="h-full w-[327px] border-l border-[#a0a0a0] pl-0.5">No Selection</div>
    <div className="flex h-full w-36 gap-3 border-l border-[#a0a0a0] pl-0.5">
      <span>Meter</span>
      <span>Degree</span>
    </div>
    <div className="h-full w-[43px] border-l border-[#a0a0a0] pl-0.5">0</div>
    <div className="flex h-full w-[55px] justify-between border-l border-[#a0a0a0] pl-0.5">
      0
      <svg className="h-[14px] w-[14px] self-end" viewBox="0 0 14 14" stroke="#a0a0a0" strokeWidth="1.500" aria-hidden="true">
        <path d="M1 14L14 1M6 14l8-8M11 14l3-3" />
      </svg>
    </div>
    <span className="pointer-events-none absolute -top-1 right-[13px] font-['Liberation_Sans','Noto_Sans_CJK_SC',sans-serif] text-sm text-[#8f8f8f]/90">
      CSDN @廉价喵
    </span>
  </footer>
);

export default function App() {
  return (
    <div className="flex h-screen flex-col overflow-hidden border border-[#6b6b6b] bg-[#f0f0f0] font-['Noto_Sans','Noto_Sans_CJK_SC',sans-serif] text-[13px] leading-4 text-black">
      <header className="flex h-[30px] shrink-0 items-center justify-between bg-white pl-2">
        <div className="flex items-center gap-1 pb-0.5">
          <AppIcon />
          <h1>A: Static Structural - DesignModeler</h1>
        </div>
        <div className="flex">
          <button type="button" aria-label="Minimize" className="flex h-[30px] w-[46px] items-center justify-center">
            <span className="h-px w-[10px] bg-black" />
          </button>
          <button type="button" aria-label="Maximize" className="flex h-[30px] w-[46px] items-center justify-center">
            <span className="h-[11px] w-[11px] border border-black" />
          </button>
          <button type="button" aria-label="Close" className="flex h-[30px] w-[46px] items-center justify-center">
            <svg className="h-[11px] w-[11px]" viewBox="0 0 11 11" stroke="#000" aria-hidden="true">
              <path d="M.5 .5l10 10M10.500 .5l-10 10" />
            </svg>
          </button>
        </div>
      </header>

      <Toolbars />

      <main className="flex min-h-0 flex-1 gap-1 bg-[#fafafa]">
        <div className="flex w-[352px] shrink-0 flex-col gap-[5px]">
          <div className="bg-[#f0f0f0]">
            <SketchingToolboxes />
          </div>
          <DetailsView />
        </div>
        <div className="flex min-w-0 flex-1 bg-[#f0f0f0]">
          <GraphicsPanel />
        </div>
      </main>

      <StatusBar />
    </div>
  );
}
